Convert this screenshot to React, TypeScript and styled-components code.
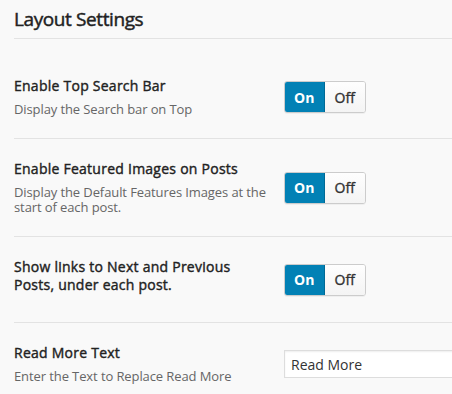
import styled, { createGlobalStyle } from "styled-components";

const GlobalStyle = createGlobalStyle`
  html, body {
    margin: 0;
    padding: 0;
    background: #f9f9f9;
    overflow: hidden;
  }
  body {
    font-family: "Open Sans", "Liberation Sans", sans-serif;
    color: #333;
  }
`

const Section = styled.section`
  margin-left: 14px;
  width: 560px;
`
const Title = styled.h3`
  margin: 0;
  padding: 9px 0 9px 0;
  font-size: 19px;
  line-height: 20px;
  font-weight: 400;
  letter-spacing: -0.4px;
  -webkit-text-stroke: 0.45px #222;
  color: #222;
  border-bottom: 1px solid #e3e3e3;
`
const List = styled.div`
  padding-top: 17px;
`
const Row = styled.div`
  display: grid;
  grid-template-columns: 256px 1fr;
  column-gap: 14px;
  align-items: center;
  padding: 21px 0;
  border-bottom: 1px solid #e3e3e3;
  &:last-child{
    border-bottom: none;
  }
`
const Label = styled.div`
  font-size: 14px;
  line-height: 18px;
  font-weight: 400;
  -webkit-text-stroke: 0.4px #222;
  letter-spacing: 0.25px;
  color: #222;
`
const Desc = styled.p`
  margin: 7px 0 0 0;
  font-size: 13px;
  line-height: 15px;
  letter-spacing: -0.1px;
  color: #666;
`
const Toggle = styled.div`
  display: flex;
  width: 82px;
  height: 32px;
  border-radius: 3px;
  overflow: hidden;
  border: 1px solid #ccc;
  box-sizing: border-box;
  box-shadow: 0 1px 0 rgba(0,0,0,0.04);
`
const ToggleSide = styled.span<{ $active?: boolean }>`
  flex: 1;
  display: flex;
  align-items: center;
  justify-content: center;
  font-size: 14px;
  font-weight: ${p => p.$active ? 700 : 400};
  -webkit-text-stroke: ${p => p.$active ? "0" : "0.35px #333"};
  color: ${p => p.$active ? "#fff" : "#333"};
  background: ${p => p.$active ? "#0281b5" : "linear-gradient(#fefefe, #f4f4f4)"};
  box-shadow: ${p => p.$active ? "inset 0 0 0 1px #006a96" : "none"};
  margin: ${p => p.$active ? "-1px 0 -1px -1px" : "0"};
`
const TextInput = styled.input`
  width: 300px;
  height: 28px;
  box-sizing: border-box;
  border: 1px solid #ddd;
  background: #fff;
  padding: 0 6px;
  font-family: "Open Sans", "Liberation Sans", sans-serif;
  font-size: 14px;
  color: #333;
  box-shadow: inset 0 1px 2px rgba(0,0,0,0.07);
  outline: none;
`

type SwitchRowType = {
  label: string
  desc?: string
}
function SwitchRow({ label, desc }: SwitchRowType) {
  return (
    <Row>
      <div>
        <Label>{label}</Label>
        <Desc>{desc}</Desc>
      </div>
      <Toggle>
        <ToggleSide $active>On</ToggleSide>
        <ToggleSide>Off</ToggleSide>
      </Toggle>
    </Row>
  )
}

export default function App() {
  return (
    <>
      <GlobalStyle />
      <Section>
        <Title>Layout Settings</Title>
        <List>
          <SwitchRow label="Enable Top Search Bar" desc="Display the Search bar on Top" />
          <SwitchRow label="Enable Featured Images on Posts" desc="Display the Default Features Images at the start of each post." />
          <SwitchRow label="Show links to Next and Previous Posts, under each post." />
          <Row>
            <div>
              <Label>Read More Text</Label>
              <Desc>Enter the Text to Replace Read More</Desc>
            </div>
            <TextInput defaultValue="Read More" />
          </Row>
        </List>
      </Section>
    </>
  )
}
